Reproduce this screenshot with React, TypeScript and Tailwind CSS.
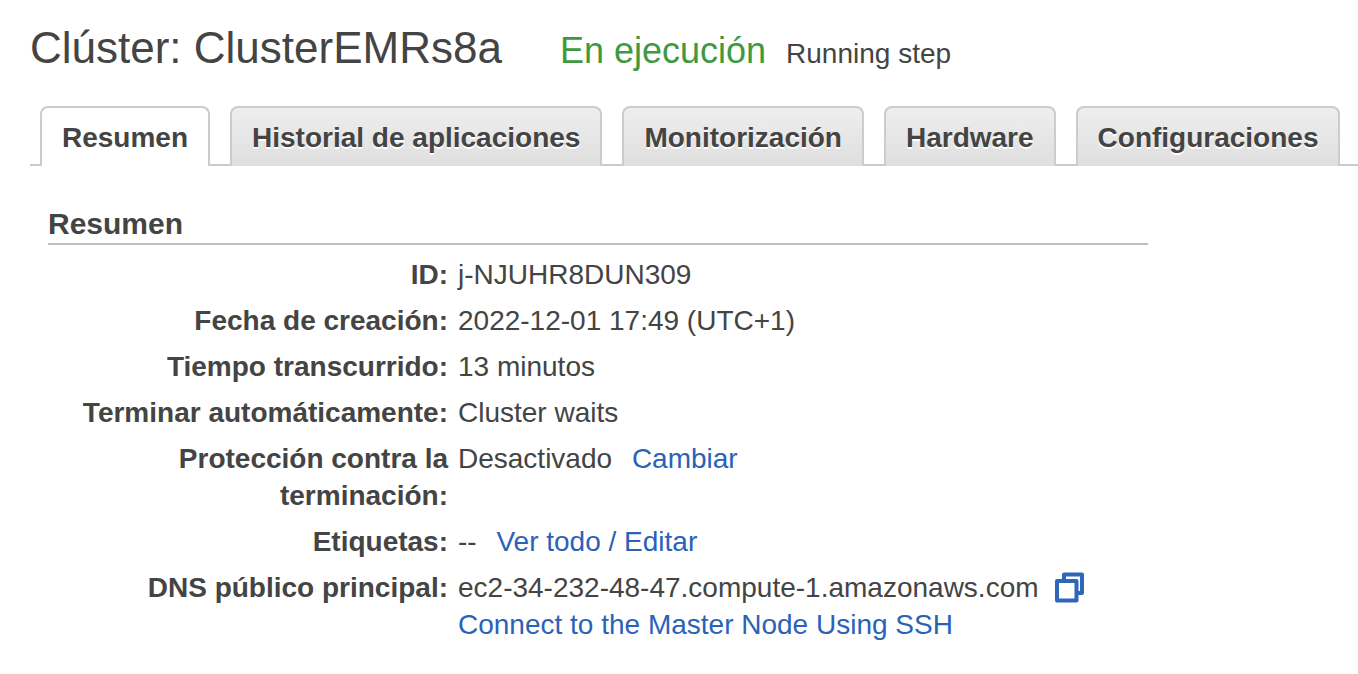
import type { ReactNode } from "react";

const tabs = ["Resumen", "Historial de aplicaciones", "Monitorización", "Hardware", "Configuraciones"];

function Row({ label, children }: { label: string; children: ReactNode }) {
  return (
    <>
      <dt className="text-right font-bold">{label}</dt>
      <dd>{children}</dd>
    </>
  );
}

function CopyIcon() {
  return (
    <svg width="30" height="32" viewBox="0 0 30 32" fill="none" stroke="#2f66b9" strokeWidth="4" strokeLinejoin="round" aria-hidden="true">
      <path d="M9 8V2.5H27V21H22" />
      <rect x="2" y="9" width="19.5" height="19.5" fill="#fff" />
    </svg>
  );
}

const link = "text-[#2a62b8] hover:underline";

export default function App() {
  return (
    <main className="min-h-screen overflow-x-hidden bg-white pt-5 pb-7 pl-[30px] font-['Liberation_Sans',Arial,sans-serif] text-[28px] leading-[37px] text-[#444]">
      <header className="flex items-baseline whitespace-nowrap">
        <h1 className="text-[44px] leading-[56px]">Clúster: ClusterEMRs8a</h1>
        <span className="ml-[58px] text-[36px] text-[#3f993f]">En ejecución</span>
        <span className="ml-5">Running step</span>
      </header>

      <nav className="mt-[30px] flex items-end whitespace-nowrap" role="tablist">
        <span className="w-[10px] shrink-0 border-b-2 border-[#ccc]" />
        {tabs.map((tab, i) => (
          <div key={tab} className="flex shrink-0 items-end">
            <button
              role="tab"
              aria-selected={i === 0}
              className={
                i === 0
                  ? "h-[60px] rounded-t-lg border-2 border-b-0 border-[#ccc] bg-white px-5 font-bold"
                  : "h-[60px] rounded-t-lg border-2 border-b-0 border-[#ccc] bg-linear-to-b from-[#eee] to-[#dfdfdf] px-5 font-bold text-shadow-[0_2px_0_#fff]"
              }
            >
              {tab}
            </button>
            <span className="w-5 border-b-2 border-[#ccc]" />
          </div>
        ))}
        <span className="grow border-b-2 border-[#ccc]" />
      </nav>

      <section className="mt-[39px] ml-[18px] max-w-[1100px]">
        <h2 className="border-b-2 border-[#bfbfbf] pb-px text-[30px] font-bold leading-[37px]">Resumen</h2>
        <dl className="mt-[11px] grid grid-cols-[400px_1fr] gap-x-[10px] gap-y-[9px]">
          <Row label="ID:">j-NJUHR8DUN309</Row>
          <Row label="Fecha de creación:">2022-12-01 17:49 (UTC+1)</Row>
          <Row label="Tiempo transcurrido:">13 minutos</Row>
          <Row label="Terminar automáticamente:">Cluster waits</Row>
          <Row label="Protección contra la terminación:">
            Desactivado <a href="#cambiar" className={`${link} ml-3`}>Cambiar</a>
          </Row>
          <Row label="Etiquetas:">
            -- <a href="#etiquetas" className={`${link} ml-3`}>Ver todo / Editar</a>
          </Row>
          <Row label="DNS público principal:">
            <div className="flex items-center gap-4 whitespace-nowrap">
              ec2-34-232-48-47.compute-1.amazonaws.com
              <button aria-label="Copiar DNS"><CopyIcon /></button>
            </div>
            <a href="#ssh" className={link}>Connect to the Master Node Using SSH</a>
          </Row>
        </dl>
      </section>
    </main>
  );
}
